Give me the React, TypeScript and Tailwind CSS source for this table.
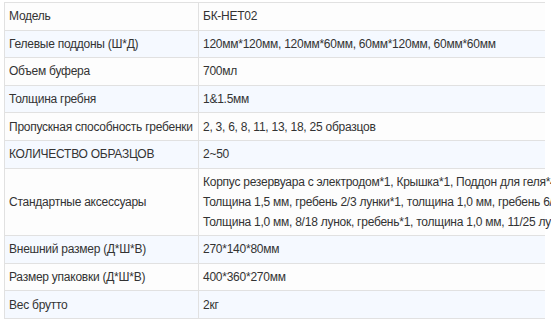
const rows: { label: string; value: string[] }[] = [
  { label: 'Модель', value: ['БК-НЕТ02'] },
  { label: 'Гелевые поддоны (Ш*Д)', value: ['120мм*120мм, 120мм*60мм, 60мм*120мм, 60мм*60мм'] },
  { label: 'Объем буфера', value: ['700мл'] },
  { label: 'Толщина гребня', value: ['1&1.5мм'] },
  { label: 'Пропускная способность гребенки', value: ['2, 3, 6, 8, 11, 13, 18, 25 образцов'] },
  { label: 'КОЛИЧЕСТВО ОБРАЗЦОВ', value: ['2~50'] },
  {
    label: 'Стандартные аксессуары',
    value: [
      'Корпус резервуара с электродом*1, Крышка*1, Поддон для геля*4, Заслонка*8',
      'Толщина 1,5 мм, гребень 2/3 лунки*1, толщина 1,0 мм, гребень 6/13 лунок*1',
      'Толщина 1,0 мм, 8/18 лунок, гребень*1, толщина 1,0 мм, 11/25 лунок, гребень*1',
    ],
  },
  { label: 'Внешний размер (Д*Ш*В)', value: ['270*140*80мм'] },
  { label: 'Размер упаковки (Д*Ш*В)', value: ['400*360*270мм'] },
  { label: 'Вес брутто', value: ['2кг'] },
]

export default function App() {
  return (
    <div className="w-[551px] h-[321px] overflow-hidden bg-white pt-[2px] pl-[4px]">
      <table
        className="w-[541px] table-fixed border-collapse text-[12px] tracking-[-0.25px] leading-[20px] text-[#333333]"
        style={{ fontFamily: '"Liberation Sans", Arial, sans-serif' }}
      >
        <colgroup>
          <col className="w-[194px]" />
          <col />
        </colgroup>
        <tbody>
          {rows.map((r, i) => (
            <tr key={r.label} className={i % 2 === 0 ? 'bg-[#fdfdfd]' : 'bg-[#f5f9ff]'}>
              <td className="border-y border-l border-r border-[#e1e1e1] px-[4px] py-[3.3px] align-middle whitespace-nowrap">
                {r.label}
              </td>
              <td className="border-y border-[#e1e1e1] px-[4px] py-[3.3px] align-middle whitespace-nowrap overflow-visible">
                {r.value.map((v, j) => (
                  <div key={j}>{v}</div>
                ))}
              </td>
            </tr>
          ))}
        </tbody>
      </table>
    </div>
  )
}
